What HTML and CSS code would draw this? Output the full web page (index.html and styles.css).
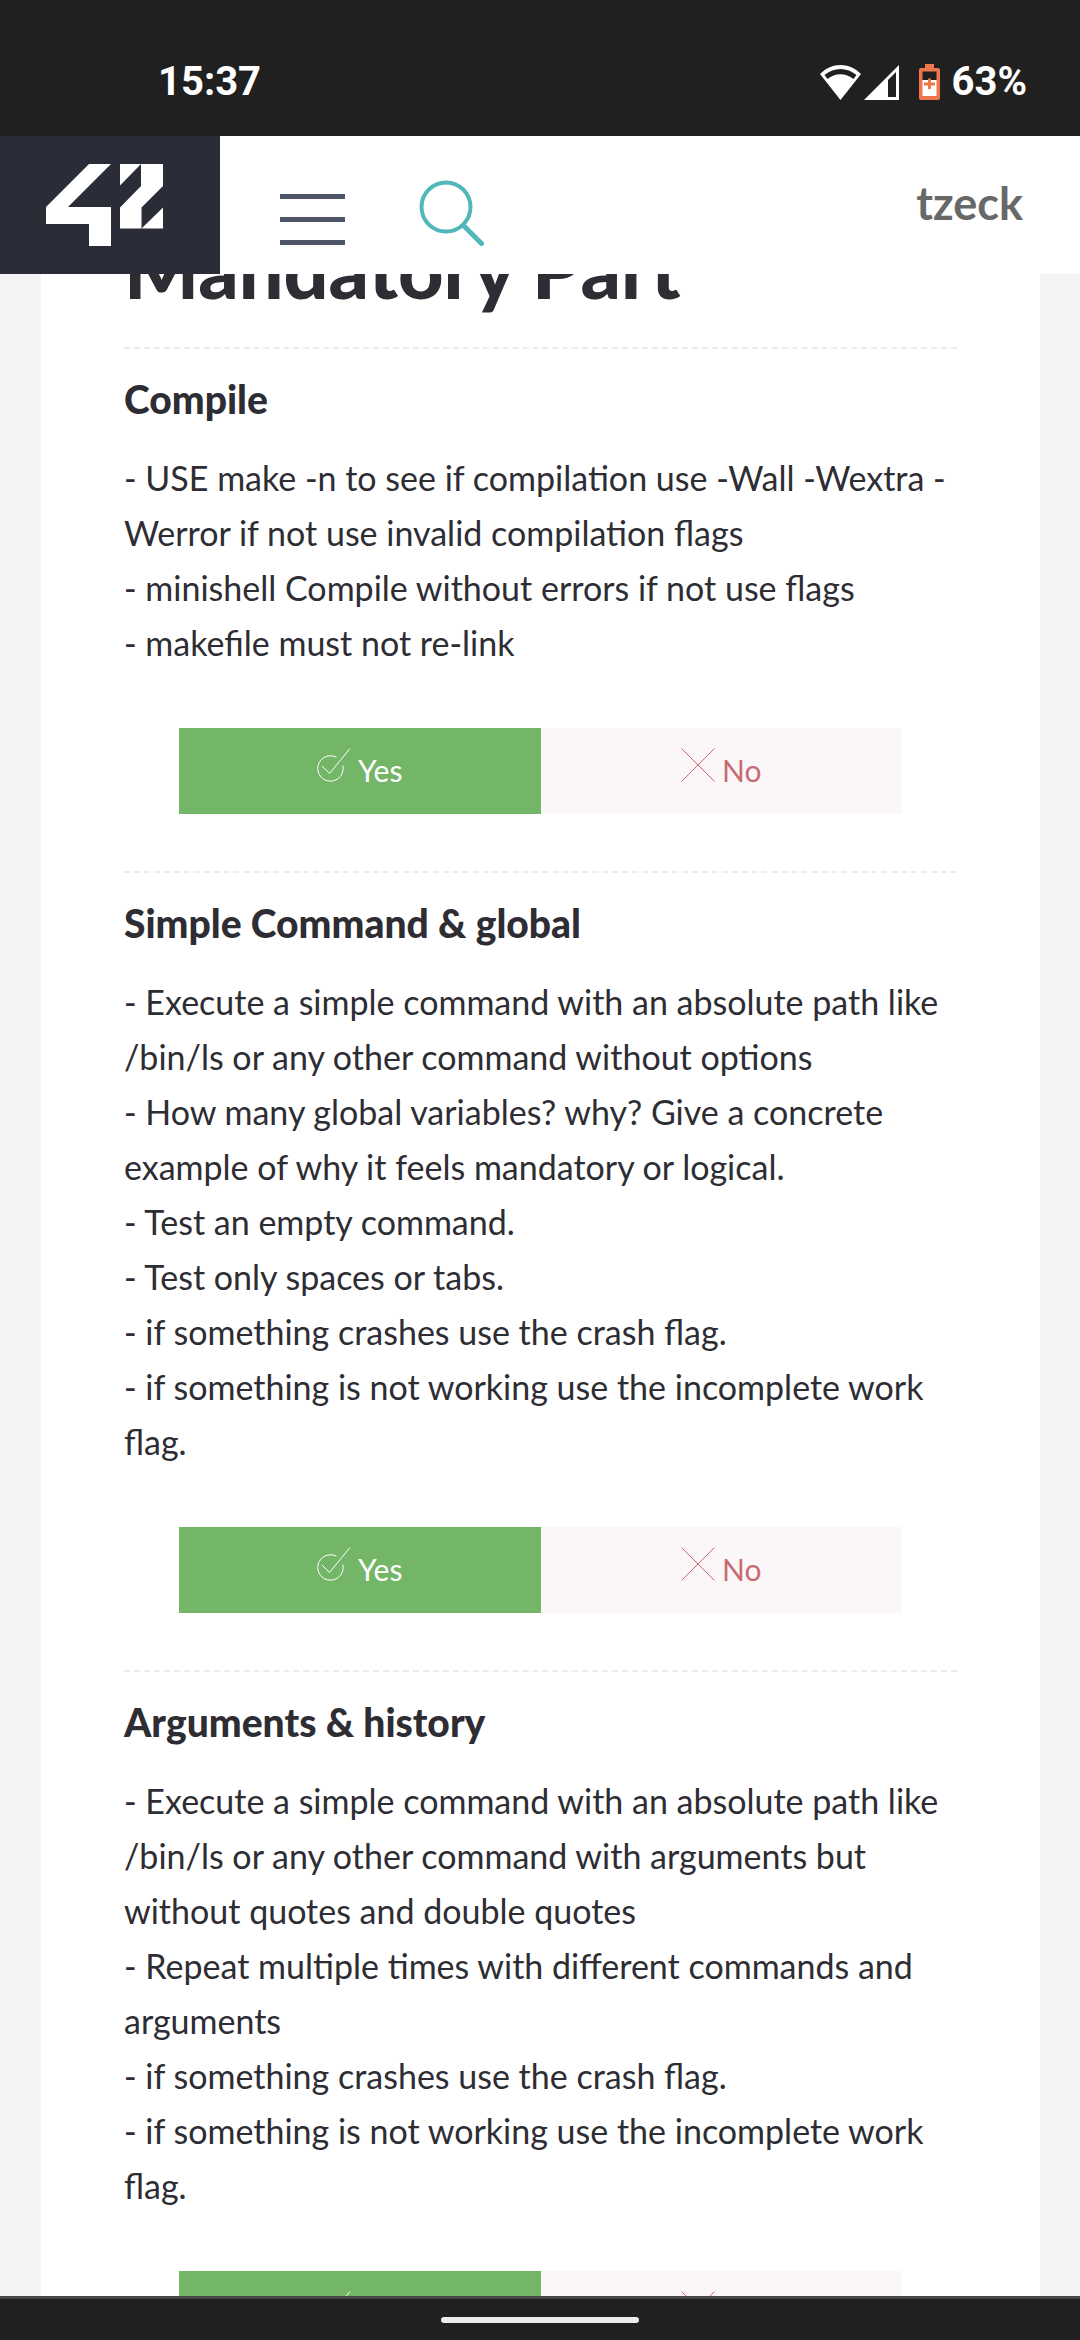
FILE: index.html
```html
<!DOCTYPE html>
<html lang="en">
<head>
<meta charset="utf-8">
<meta name="viewport" content="width=device-width, initial-scale=1">
<title>Evaluation - Mandatory Part</title>
<link rel="stylesheet" href="styles.css">
</head>
<body>
<svg class="sprite" aria-hidden="true">
  <symbol id="icon-yes" viewBox="0 0 34 34">
    <path d="M19.500 9.300A12.700 12.700 0 1 0 25.800 17.500M5 18l7.500 7.500L33 .500"/>
  </symbol>
  <symbol id="icon-no" viewBox="0 0 34 34">
    <path d="M.500 .500l33 33M33.500 .500l-33 33"/>
  </symbol>
</svg>
<div class="screen">
  <div class="status">
    <span>15:37</span>
    <div class="status-icons">
      <svg class="wifi" viewBox="0 0 41 35" aria-hidden="true">
        <path d="M20.500 35L0 9C12 -3 29 -3 41 9Z" fill="#fff"/>
        <path d="M4.500 10C14 2 27 2 36.500 10L33.500 14C26 7.500 15 7.500 7.500 14Z" fill="#202020"/>
      </svg>
      <svg class="signal" viewBox="0 0 35 35" aria-hidden="true">
        <path d="M35 0V35H0Z" fill="#fff"/>
        <path d="M24 15L32 7V32H24Z" fill="#202020"/>
      </svg>
      <svg class="battery" viewBox="0 0 21 36" aria-hidden="true">
        <path d="M6 4V0H15V4H19Q21 4 21 6V34Q21 36 19 36H2Q0 36 0 34V6Q0 4 2 4Z" fill="#ed764d"/>
        <path d="M3.500 7.500H17.500V16H3.500Z" fill="#202020"/>
        <path d="M3.500 16H17.500V32H3.500Z" fill="#fff"/>
        <path d="M9 14.500H12V18.500H16V21.500H12V25H9V21.500H5V18.500H9Z" fill="#ed764d"/>
      </svg>
      <span>63%</span>
    </div>
  </div>

  <header class="header">
    <a class="logo" href="#" aria-label="42">
      <svg viewBox="0 0 117 82" aria-hidden="true">
        <path fill="#fff" d="M43 0H65L22 43H65V82H43V60H0V43ZM74 0H95L74 21.500ZM95 0H117V22L95.500 43.500V64.500H74V43.500L95 22ZM117 43.500V64.500H95.500Z"/>
      </svg>
    </a>
    <button class="icon-button menu" type="button" aria-label="Menu">
      <svg viewBox="0 0 65 51" aria-hidden="true"><path fill="#4f5568" d="M0 0h65v5H0zM0 23h65v5H0zM0 46h65v5H0z"/></svg>
    </button>
    <button class="icon-button search" type="button" aria-label="Search">
      <svg viewBox="0 0 66 66" aria-hidden="true" fill="none" stroke="#51b7b9"><circle cx="27" cy="27" r="24.500" stroke-width="4"/><path d="M45.500 46.500L62.500 63.500" stroke-width="5" stroke-linecap="round"/></svg>
    </button>
    <a class="user" href="#">tzeck</a>
  </header>

  <main class="viewport">
    <div class="card">
      <h1>Mandatory Part</h1>

      <section>
        <h2>Compile</h2>
        <p>- USE make -n to see if compilation use -Wall -Wextra -<wbr>Werror if not use invalid compilation flags<br>
        - minishell Compile without errors if not use flags<br>
        - makefile must not re-link</p>
        <div class="answers">
          <button class="yes" type="button"><svg aria-hidden="true"><use href="#icon-yes"/></svg>Yes</button>
          <button class="no" type="button"><svg aria-hidden="true"><use href="#icon-no"/></svg>No</button>
        </div>
      </section>

      <section>
        <h2>Simple Command &amp; global</h2>
        <p>- Execute a simple command with an absolute path like /bin/ls or any other command without options<br>
        - How many global variables? why? Give a concrete example of why it feels mandatory or logical.<br>
        - Test an empty command.<br>
        - Test only spaces or tabs.<br>
        - if something crashes use the crash flag.<br>
        - if something is not working use the incomplete work flag.</p>
        <div class="answers">
          <button class="yes" type="button"><svg aria-hidden="true"><use href="#icon-yes"/></svg>Yes</button>
          <button class="no" type="button"><svg aria-hidden="true"><use href="#icon-no"/></svg>No</button>
        </div>
      </section>

      <section>
        <h2>Arguments &amp; history</h2>
        <p>- Execute a simple command with an absolute path like /bin/ls or any other command with arguments but<br>
        without quotes and double quotes<br>
        - Repeat multiple times with different commands and arguments<br>
        - if something crashes use the crash flag.<br>
        - if something is not working use the incomplete work<br>
        flag.</p>
        <div class="answers">
          <button class="yes" type="button"><svg aria-hidden="true"><use href="#icon-yes"/></svg>Yes</button>
          <button class="no" type="button"><svg aria-hidden="true"><use href="#icon-no"/></svg>No</button>
        </div>
      </section>
    </div>
  </main>

  <div class="navbar"><div class="pill"></div></div>
</div>
</body>
</html>
```

FILE: styles.css
```css
* { box-sizing: border-box; }

body {
  margin: 0;
  background: #f4f4f4;
  color: #2d2d33;
  font-family: Lato, "Liberation Sans", sans-serif;
}

button {
  border: 0;
  padding: 0;
  background: none;
  font: inherit;
}

a { text-decoration: none; }

svg { display: block; }

.sprite { display: none; }

.screen {
  display: flex;
  flex-direction: column;
  height: 100vh;
  overflow: hidden;
}

/* system status bar */
.status {
  flex: none;
  display: flex;
  justify-content: space-between;
  padding: 58px 53px 30px 158px;
  background: #202020;
  color: #fff;
  font: 700 40px/48px Roboto, sans-serif;
}

.status-icons {
  display: flex;
  align-items: center;
}

.wifi { width: 41px; height: 35px; margin-right: 3px; }
.signal { width: 35px; height: 35px; margin-right: 20px; }
.battery { width: 21px; height: 36px; margin-right: 12px; }

/* site header */
.header {
  flex: none;
  display: flex;
  align-items: flex-start;
  background: #fff;
}

.logo {
  padding: 28px 57px 28px 46px;
  background: #2a2c38;
}

.logo svg { width: 117px; height: 82px; }

.icon-button { flex: none; }
.menu { margin: 58px 0 0 60px; }
.menu svg { width: 65px; height: 51px; }
.search { margin: 44px 0 0 74px; }
.search svg { width: 66px; height: 66px; }

.user {
  margin: 40px 57px 0 auto;
  color: #686868;
  font-size: 45px;
  font-weight: 700;
  line-height: 54px;
}

/* scrolled page content */
.viewport {
  flex: 1;
  min-height: 0;
  overflow: hidden;
  padding: 0 40px 0 41px;
}

.card {
  padding: 0 83px;
  background: #fff;
}

h1 {
  margin: -53px 0 30px;
  font-size: 79px;
  font-weight: 900;
  line-height: 96px;
}

section {
  border-top: 2px dashed #ececec;
  padding: 26px 0 57px;
}

h2 {
  margin: 0;
  font-size: 39px;
  font-weight: 900;
  line-height: 48px;
}

p {
  margin: 27px 0 0;
  font-size: 34px;
  line-height: 55px;
}

.answers {
  display: flex;
  margin: 58px 55px 0;
}

.answers button {
  flex: 1;
  display: flex;
  justify-content: center;
  gap: 7px;
  height: 86px;
  padding-top: 20px;
  font-size: 30px;
  line-height: 44px;
}

.answers svg {
  width: 34px;
  height: 34px;
  fill: none;
  stroke: currentColor;
}

.answers .yes {
  background: #73b667;
  color: #fff;
}

.answers .no {
  border-radius: 0 2px 2px 0;
  background: #fbf7f9;
  color: #c96a72;
}

/* gesture bar */
.navbar {
  flex: none;
  display: flex;
  justify-content: center;
  height: 44px;
  padding-top: 18px;
  border-top: 3px solid #484848;
  background: #202020;
}

.pill {
  width: 198px;
  height: 6px;
  border-radius: 3px;
  background: #ececec;
}
```
